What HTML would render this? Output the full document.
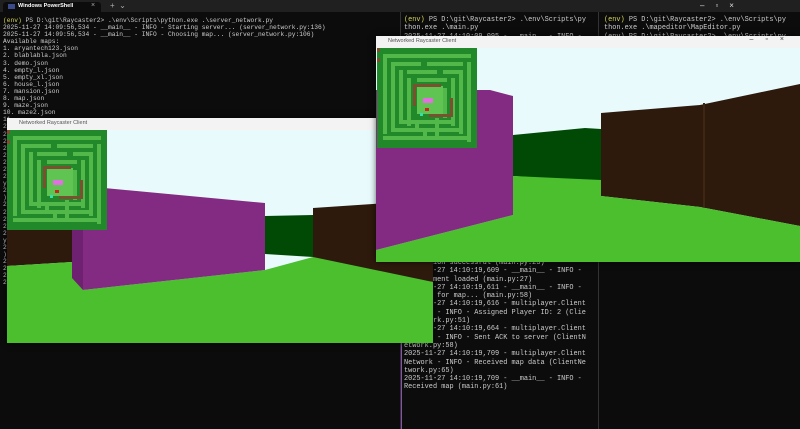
<!DOCTYPE html>
<html><head><style>
body{margin:0;width:800px;height:429px;overflow:hidden;background:#0c0c0c;position:relative;font-family:"Liberation Mono",monospace}
.t{position:absolute;color:#cccccc;white-space:pre;line-height:7.1px;font-size:6.25px}
.m{position:absolute;color:#cccccc;white-space:pre;font-size:6.9px;line-height:8.3px}
.y{color:#d6d65a}
.win{position:absolute;background:#f3f3f3;box-shadow:0 0 6px rgba(0,0,0,.6)}
.tt{position:absolute;left:12px;top:2px;font:5.5px "Liberation Sans",sans-serif;color:#555}
</style></head><body>
<div style="position:absolute;left:0;top:0;width:800px;height:12px;background:#202020"></div>
<div style="position:absolute;left:3px;top:2px;width:98px;height:10px;background:#0c0c0c;border-radius:3px 3px 0 0"></div>
<div style="position:absolute;left:8px;top:4px;width:7px;height:5px;background:#3a4a8a"></div>
<div style="position:absolute;left:18px;top:3px;font:bold 5.5px 'Liberation Sans',sans-serif;color:#fff">Windows PowerShell</div>
<div style="position:absolute;left:91px;top:2px;font:7px 'Liberation Sans';color:#aaa">×</div>
<div style="position:absolute;left:110px;top:1px;font:8px 'Liberation Sans';color:#aaa">+ &nbsp;⌄</div>
<div style="position:absolute;left:700px;top:1px;font:8px 'Liberation Sans';color:#ddd;letter-spacing:11px">–▫×</div>
<div style="position:absolute;left:400px;top:12px;width:1px;height:417px;background:#333"></div>
<div style="position:absolute;left:401px;top:262px;width:1px;height:167px;background:#8a4fb0"></div>
<div style="position:absolute;left:598px;top:12px;width:1px;height:417px;background:#333"></div>
<div class="t" style="left:3px;top:17px"><span class="y">(env)</span> PS D:\git\Raycaster2&gt; .\env\Scripts\python.exe .\server_network.py
2025-11-27 14:09:56,534 - __main__ - INFO - Starting server... (server_network.py:136)
2025-11-27 14:09:56,534 - __main__ - INFO - Choosing map... (server_network.py:106)
Available maps:
1. aryantech123.json
2. blablabla.json
3. demo.json
4. empty_l.json
5. empty_xl.json
6. house_l.json
7. mansion.json
8. map.json
9. maze.json
10. maze2.json
11
2
2
2
2
2
2
2
2
y
2
)
2
2
2
2
2
y
2
)
2
2
2
2</div>
<div class="m" style="left:404px;top:16px"><span class="y">(env)</span> PS D:\git\Raycaster2&gt; .\env\Scripts\py
thon.exe .\main.py
2025-11-27 14:10:09,095 - __main__ - INFO -</div>
<div class="m" style="left:604px;top:16px"><span class="y">(env)</span> PS D:\git\Raycaster2&gt; .\env\Scripts\py
thon.exe .\mapeditor\MapEditor.py
(env) PS D:\git\Raycaster2&gt; .\env\Scripts\py</div>
<div class="m" style="left:404px;top:259px">Connection successful (main.py:23)
2025-11-27 14:10:19,609 - __main__ - INFO -
Environment loaded (main.py:27)
2025-11-27 14:10:19,611 - __main__ - INFO -
Waiting for map... (main.py:58)
2025-11-27 14:10:19,616 - multiplayer.Client
Network - INFO - Assigned Player ID: 2 (Clie
ntNetwork.py:51)
2025-11-27 14:10:19,664 - multiplayer.Client
Network - INFO - Sent ACK to server (ClientN
etwork.py:58)
2025-11-27 14:10:19,709 - multiplayer.Client
Network - INFO - Received map data (ClientNe
twork.py:65)
2025-11-27 14:10:19,709 - __main__ - INFO -
Received map (main.py:61)</div>

<svg width="0" height="0" style="position:absolute"><defs>
<g id="maze">
<rect width="100" height="100" fill="#21892a"/>
<g fill="#52b84a">
<rect x="6" y="6" width="88" height="4"/><rect x="6" y="6" width="4" height="80"/>
<rect x="14" y="14" width="4" height="70"/><rect x="14" y="14" width="30" height="4"/>
<rect x="50" y="14" width="36" height="4"/><rect x="22" y="22" width="4" height="54"/>
<rect x="30" y="22" width="30" height="4"/><rect x="66" y="22" width="20" height="4"/>
<rect x="82" y="22" width="4" height="64"/><rect x="90" y="14" width="4" height="80"/>
<rect x="30" y="30" width="4" height="40"/><rect x="40" y="30" width="30" height="4"/>
<rect x="74" y="30" width="4" height="48"/><rect x="40" y="38" width="26" height="28" fill="#5fc451"/>
<rect x="14" y="80" width="70" height="4"/><rect x="22" y="72" width="56" height="4"/>
<rect x="6" y="88" width="84" height="4"/><rect x="30" y="64" width="4" height="14"/>
<rect x="58" y="70" width="4" height="18"/><rect x="66" y="40" width="4" height="30"/>
<rect x="46" y="80" width="4" height="12"/><rect x="38" y="72" width="4" height="12"/>
</g>
<rect x="36" y="36" width="28" height="3" fill="#7a5030"/><rect x="36" y="36" width="3" height="22" fill="#7a5030"/>
<rect x="52" y="66" width="24" height="3" fill="#7a5030"/><rect x="73" y="50" width="3" height="18" fill="#7a5030"/>
<rect x="46" y="50" width="10" height="5" fill="#e070e0"/>
<rect x="48" y="60" width="4" height="3" fill="#d02020"/><rect x="43" y="65" width="3" height="3" fill="#30e0b0"/>
<rect x="0" y="0" width="3" height="4" fill="#7a5030"/><rect x="0" y="10" width="3" height="4" fill="#7a5030"/>
</g></defs></svg>

<!-- left game window -->
<div class="win" style="left:7px;top:118px;width:426px;height:225px">
<div class="tt">Networked Raycaster Client</div>
<svg style="position:absolute;left:0;top:12px" width="426" height="213" viewBox="7 130 426 213">
<rect x="7" y="130" width="426" height="213" fill="#e8fafc"/>
<polygon points="7,230 72,230 72,262 7,266" fill="#2d1a0c"/>
<polygon points="313,208 433,200 433,282 313,268" fill="#2d1a0c"/>
<polygon points="265,216 313,215 313,257 265,254" fill="#014a06"/>
<polygon points="7,266 72,262 83,290 265,270 313,257 433,282 433,343 7,343" fill="#4bbf2d"/>
<polygon points="72,230 83,230 83,290 72,278" fill="#6d2170"/>
<polygon points="83,186 265,203 265,270 83,290" fill="#832a82"/>
<use href="#maze" transform="translate(7,130)"/>
</svg></div>

<!-- right game window -->
<div class="win" style="left:376px;top:36px;width:424px;height:226px">
<div class="tt">Networked Raycaster Client</div>
<div style="position:absolute;right:4px;top:0px;font:7px 'Liberation Sans';color:#333;letter-spacing:12px">–▫×</div>
<svg style="position:absolute;left:0;top:12px" width="424" height="214" viewBox="376 48 424 214">
<rect x="376" y="48" width="424" height="214" fill="#e8fafc"/>
<polygon points="601,113 700,105 800,84 800,226 700,207 601,196" fill="#2d1a0c"/>
<rect x="703" y="103" width="2" height="105" fill="#3e2612"/>
<polygon points="513,135 585,128 601,129 601,182 513,176" fill="#014a06"/>
<polygon points="376,262 376,250 513,215 513,176 601,180 601,196 700,207 800,226 800,262" fill="#4bbf2d"/>
<polygon points="376,90 490,90 513,96 513,215 376,250" fill="#832a82"/>
<use href="#maze" transform="translate(377,48)"/>
</svg></div>
</body></html>
